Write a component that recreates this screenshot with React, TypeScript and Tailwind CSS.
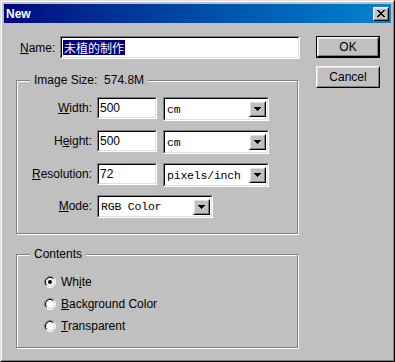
import type { ReactNode } from "react";

function Sunken({ className = "", children }: { className?: string; children?: ReactNode }) {
  return (
    <div className={`border border-t-[#808080] border-l-[#808080] border-b-white border-r-white ${className}`}>
      <div className="flex h-full w-full items-center border border-t-black border-l-black border-b-[#dfdfdf] border-r-[#dfdfdf] bg-white">
        {children}
      </div>
    </div>
  );
}

function Raised({ className = "", children }: { className?: string; children?: ReactNode }) {
  return (
    <div className={`border border-t-white border-l-white border-b-black border-r-black bg-[#c0c0c0] ${className}`}>
      <div className="flex h-full w-full items-center justify-center border border-t-[#dfdfdf] border-l-[#dfdfdf] border-b-[#808080] border-r-[#808080]">
        {children}
      </div>
    </div>
  );
}

function Select({ value, width, height }: { value: string; width: string; height: string }) {
  return (
    <Sunken className={`${width} ${height}`}>
      <span className="flex-1 overflow-hidden whitespace-nowrap pl-[2px] pt-[1px] font-['Liberation_Mono',monospace] text-[11.5px] tracking-[-0.2px] text-black">
        {value}
      </span>
      <Raised className="mr-[1px] h-[16px] w-[17px] shrink-0">
        <svg width="7" height="4" viewBox="0 0 7 4">
          <path d="M0 0h7v1H0zM1 1h5v1H1zM2 2h3v1H2zM3 3h1v1H3z" fill="#000" />
        </svg>
      </Raised>
    </Sunken>
  );
}

function Field({ value }: { value: string }) {
  return (
    <Sunken className="h-[22px] w-[60px]">
      <span className="pl-[1px] text-[12px] text-black">{value}</span>
    </Sunken>
  );
}

function Radio({ checked }: { checked?: boolean }) {
  return (
    <svg width="12" height="12" viewBox="0 0 12 12">
      <circle cx="6" cy="6" r="4" fill="#fff" />
      <path d="M2.11 9.89A5.5 5.5 0 0 1 9.89 2.11" stroke="#808080" fill="none" />
      <path d="M9.89 2.11A5.5 5.5 0 0 1 2.11 9.89" stroke="#fff" fill="none" />
      <path d="M2.82 9.18A4.5 4.5 0 0 1 9.18 2.82" stroke="#000" fill="none" />
      <path d="M9.18 2.82A4.5 4.5 0 0 1 2.82 9.18" stroke="#dfdfdf" fill="none" />
      {checked && <circle cx="6" cy="6" r="2" fill="#000" />}
    </svg>
  );
}

function Group({ label, className = "", children }: { label: string; className?: string; children: ReactNode }) {
  return (
    <div className={`relative w-[282px] border border-[#808080] shadow-[inset_1px_1px_0_#fff,1px_1px_0_#fff] ${className}`}>
      <span className="absolute left-[13px] top-[-9px] whitespace-pre bg-[#c0c0c0] px-[4px] text-[12px] leading-[16px] text-black">
        {label}
      </span>
      {children}
    </div>
  );
}

function Row({ label, children }: { label: ReactNode; children: ReactNode }) {
  return (
    <div className="flex items-start">
      <div className="flex h-[22px] w-[75px] items-center justify-end text-[12px] text-black">{label}</div>
      <div className="ml-[5px] flex items-start gap-[6px]">{children}</div>
    </div>
  );
}

function Choice({ label, checked }: { label: ReactNode; checked?: boolean }) {
  return (
    <div className="flex h-[16px] items-center gap-[5px] text-[12px] text-black">
      <Radio checked={checked} />
      <span>{label}</span>
    </div>
  );
}

export default function App() {
  return (
    <div className="h-[362px] w-[395px] border border-t-[#dfdfdf] border-l-[#dfdfdf] border-b-black border-r-black bg-[#c0c0c0] font-['Liberation_Sans',Arial,sans-serif]">
      <div className="h-full w-full border border-t-white border-l-white border-b-[#808080] border-r-[#808080] p-[2px]">
        <div className="flex h-[19px] items-center justify-between bg-linear-to-r from-[#000080] to-[#1084d0] pl-[2px] pr-[2px]">
          <span className="text-[12px] font-bold text-white">New</span>
          <Raised className="h-[14px] w-[16px]">
            <svg width="8" height="7" viewBox="0 0 8 7">
              <path d="M0 0h2v1H0zM6 0h2v1H6zM1 1h2v1H1zM5 1h2v1H5zM2 2h4v1H2zM3 3h2v1H3zM2 4h4v1H2zM1 5h2v1H1zM5 5h2v1H5zM0 6h2v1H0zM6 6h2v1H6z" fill="#000" />
            </svg>
          </Raised>
        </div>

        <div className="flex pl-[12px] pt-[13px]">
          <div className="flex flex-col">
            <div className="flex h-[23px] items-center">
              <span className="w-[44px] pl-[4px] text-[12px] text-black">
                <u>N</u>ame:
              </span>
              <Sunken className="h-[23px] w-[240px]">
                <span className="ml-[1px] bg-[#000080] px-[1px] font-['Noto_Sans_CJK_SC',sans-serif] text-[12px] leading-[15px] text-white">
                  未植的制作
                </span>
              </Sunken>
            </div>

            <Group label="Image Size:  574.8M" className="mt-[21px] h-[154px]">
              <div className="flex flex-col pt-[16px]">
                <Row label={<><u>W</u>idth:</>}>
                  <Field value="500" />
                  <Select value="cm" width="w-[106px]" height="h-[24px]" />
                </Row>
                <div className="mt-[9px]">
                  <Row label={<>H<u>e</u>ight:</>}>
                    <Field value="500" />
                    <Select value="cm" width="w-[106px]" height="h-[24px]" />
                  </Row>
                </div>
                <div className="mt-[9px]">
                  <Row label={<><u>R</u>esolution:</>}>
                    <Field value="72" />
                    <Select value="pixels/inch" width="w-[106px]" height="h-[24px]" />
                  </Row>
                </div>
                <div className="mt-[8px]">
                  <Row label={<><u>M</u>ode:</>}>
                    <Select value="RGB Color" width="w-[116px]" height="h-[23px]" />
                  </Row>
                </div>
              </div>
            </Group>

            <Group label="Contents" className="mt-[20px] h-[94px]">
              <div className="flex flex-col gap-[6px] pl-[27px] pt-[19px]">
                <Choice checked label={<>Wh<u>i</u>te</>} />
                <Choice label={<><u>B</u>ackground Color</>} />
                <Choice label={<><u>T</u>ransparent</>} />
              </div>
            </Group>
          </div>

          <div className="ml-[16px] flex flex-col">
            <div className="h-[22px] w-[64px] border border-black">
              <Raised className="h-full w-full">
                <span className="text-[12px] text-black">OK</span>
              </Raised>
            </div>
            <Raised className="mt-[8px] h-[22px] w-[64px]">
              <span className="text-[12px] text-black">Cancel</span>
            </Raised>
          </div>
        </div>
      </div>
    </div>
  );
}
